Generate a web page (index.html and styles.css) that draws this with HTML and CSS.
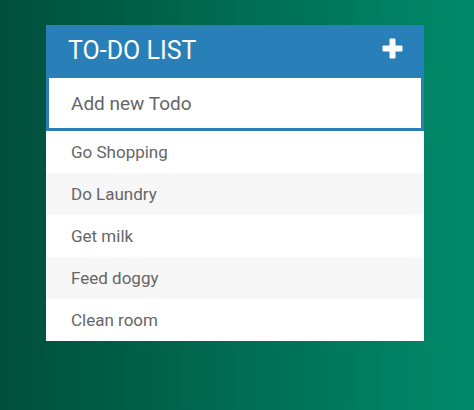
FILE: index.html
```html
<!DOCTYPE html>
<html>
<head>
<meta charset="utf-8">
<link rel="stylesheet" href="styles.css">
</head>
<body>
<div class="todo">
  <div class="header">
    <h1 class="title">To-Do List</h1>
    <svg class="plus" width="21" height="21" viewBox="0 0 21 21"><path d="M7.5 1.5 a1 1 0 0 1 1-1 h4 a1 1 0 0 1 1 1 v6 h6 a1 1 0 0 1 1 1 v4 a1 1 0 0 1-1 1 h-6 v6 a1 1 0 0 1-1 1 h-4 a1 1 0 0 1-1-1 v-6 h-6 a1 1 0 0 1-1-1 v-4 a1 1 0 0 1 1-1 h6 z" fill="#fff"/></svg>
  </div>
  <div class="add">
    <input class="add-input" type="text" placeholder="Add new Todo">
  </div>
  <ul class="list">
    <li class="item">Go Shopping</li>
    <li class="item">Do Laundry</li>
    <li class="item">Get milk</li>
    <li class="item">Feed doggy</li>
    <li class="item">Clean room</li>
  </ul>
</div>
</body>
</html>
```
FILE: styles.css
```css
* { box-sizing: border-box; }
html, body { margin: 0; height: 100%; }
body {
  background: linear-gradient(90deg, #004f3b 0%, #00694f 45%, #008a6b 100%);
  font-family: Roboto, "Liberation Sans", sans-serif;
  padding: 25px 0 0 46px;
}
.todo {
  width: 378px;
  background: #fff;
}
.header {
  background: #2980b9;
  height: 53px;
  display: flex;
  align-items: center;
  justify-content: space-between;
  padding: 0 21px 0 22px;
}
.title {
  margin: 0;
  color: #fff;
  font-weight: 400;
  font-size: 25px;
  text-transform: uppercase;
  line-height: 1;
  margin-top: -2px;
}
.plus { display: block; margin-top: -7px; }
.add {
  border: 3px solid #2980b9;
  border-top: 0;
  height: 53px;
}
.add-input {
  display: block;
  width: 100%;
  height: 100%;
  border: 0;
  outline: none;
  padding: 0 0 0 22px;
  font-family: Roboto, "Liberation Sans", sans-serif;
  font-size: 19px;
  color: #666;
  background: #fff;
}
.add-input::placeholder { color: #666; opacity: 1; }
.list { list-style: none; margin: 0; padding: 0; }
.item {
  height: 42px;
  line-height: 42px;
  padding-left: 25px;
  font-size: 17px;
  color: #666;
  background: #fff;
}
.item:nth-child(even) { background: #f7f7f7; }
```
